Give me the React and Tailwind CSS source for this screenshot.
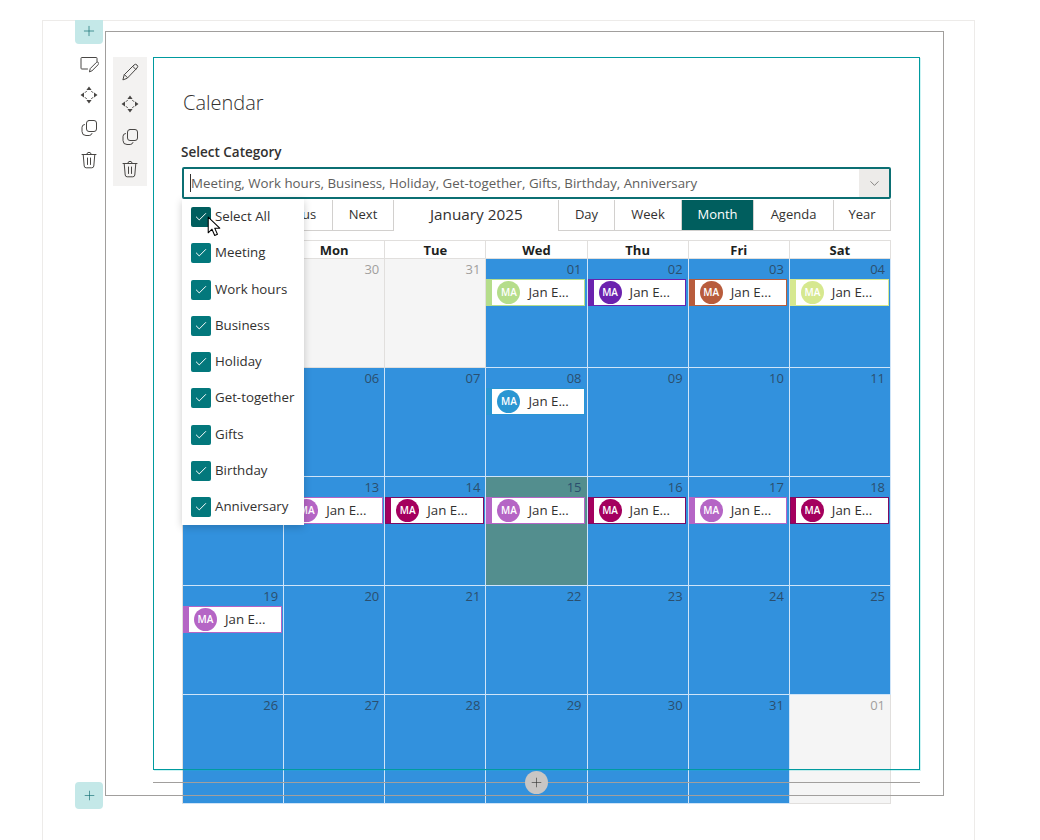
import React from "react";
import { Check, ChevronDown, Plus } from "lucide-react";

const categories = ["Select All", "Meeting", "Work hours", "Business", "Holiday", "Get-together", "Gifts", "Birthday", "Anniversary"];

const green = { bar: "bg-[#b5dd8b]", line: "border-[#b5dd8b]" };
const purple = { bar: "bg-[#6b22ae]", line: "border-[#6b22ae]" };
const rust = { bar: "bg-[#b85c3c]", line: "border-[#b85c3c]" };
const lime = { bar: "bg-[#d6e88f]", line: "border-[#d6e88f]" };
const sky = { bar: "bg-[#2a96d2]", line: "border-[#2a96d2]" };
const orchid = { bar: "bg-[#b565c5]", line: "border-[#b565c5]" };
const berry = { bar: "bg-[#a4005e]", line: "border-[#7d0b63]" };

const headers = ["Sun", "Mon", "Tue", "Wed", "Thu", "Fri", "Sat"];

const days = [
  { n: "29", off: true }, { n: "30", off: true }, { n: "31", off: true }, { n: "01", ev: green }, { n: "02", ev: purple }, { n: "03", ev: rust }, { n: "04", ev: lime },
  { n: "05" }, { n: "06" }, { n: "07" }, { n: "08", ev: sky }, { n: "09" }, { n: "10" }, { n: "11" },
  { n: "12", ev: orchid }, { n: "13", ev: orchid }, { n: "14", ev: berry }, { n: "15", ev: orchid, today: true }, { n: "16", ev: berry }, { n: "17", ev: orchid }, { n: "18", ev: berry },
  { n: "19", ev: orchid }, { n: "20" }, { n: "21" }, { n: "22" }, { n: "23" }, { n: "24" }, { n: "25" },
  { n: "26" }, { n: "27" }, { n: "28" }, { n: "29" }, { n: "30" }, { n: "31" }, { n: "01", off: true },
];

function Icon({ children }) {
  return (
    <svg width="20" height="20" viewBox="0 0 20 20" fill="none" stroke="#484644" strokeWidth="1" strokeLinecap="round" strokeLinejoin="round">
      {children}
    </svg>
  );
}

const NoteIcon = () => (
  <Icon>
    <path d="M8.5 15H2.8a.8.8 0 0 1-.8-.8V4.3a.8.8 0 0 1 .8-.8h14.4a.8.8 0 0 1 .8.8v3.2" />
    <path d="M10.5 17.5l.8-3 6-6a1.4 1.4 0 0 1 2 2l-6 6z" />
  </Icon>
);

const PencilIcon = () => (
  <Icon>
    <path d="M3 17.5l1.2-4.7L14 3a2 2 0 0 1 3 3L7.5 16z" />
    <path d="M12.8 4.4l2.9 2.9M4.4 12.6l3 3" />
  </Icon>
);

const MoveIcon = () => (
  <Icon>
    <path d="M10 1.5L7.4 5h5.2zM10 18.5L7.4 15h5.2zM1.5 10L5 7.4v5.2zM18.5 10L15 7.4v5.2z" fill="#484644" stroke="none" />
    <path d="M7.5 6.2L6.2 7.5M12.5 6.2L13.8 7.5M7.5 13.8L6.2 12.5M12.5 13.8L13.8 12.5" />
  </Icon>
);

const CopyIcon = () => (
  <Icon>
    <rect x="7.5" y="2.5" width="10" height="11" rx="2.5" />
    <path d="M5.5 6.5A2.8 2.8 0 0 0 3 9.3v4.2a4 4 0 0 0 4 4h3.2a3 3 0 0 0 2.8-2" />
  </Icon>
);

const TrashIcon = () => (
  <Icon>
    <path d="M3 4.5h14M7.8 4.5a2.2 2.2 0 0 1 4.4 0" />
    <path d="M4.2 4.5l1 11.5a2 2 0 0 0 2 1.8h5.6a2 2 0 0 0 2-1.8l1-11.5" />
    <path d="M8.5 8v6.5M11.5 8v6.5" />
  </Icon>
);

function CalEvent({ ev }) {
  return (
    <div className={`mt-px mr-[1.5px] h-[27px] flex items-center bg-white border ${ev.line}`}>
      <div className={`w-[5px] h-full ${ev.bar}`} />
      <div className={`ml-[5px] w-[23px] h-[23px] rounded-full flex items-center justify-center text-[10px] font-semibold text-white ${ev.bar}`}>
        MA
      </div>
      <span className="ml-[8px] text-[13.3px] text-[#323130]">Jan E...</span>
    </div>
  );
}

function DayCell({ day }) {
  let bg = "bg-[#3291dd] border-[#cfe4f8]";
  let num = "text-[#2b4f6e]";
  if (day.off) {
    bg = "bg-[#f5f5f5] border-[#e1dfdd]";
    num = "text-[#a19f9d]";
  }
  if (day.today) {
    bg = "bg-[#538e8e] border-[#cfe4f8]";
  }
  return (
    <div className={`h-[109px] border-r border-b ${bg}`}>
      <div className={`h-[19px] pr-[5px] text-right text-[13px] leading-[21px] ${num}`}>{day.n}</div>
      {day.ev && <CalEvent ev={day.ev} />}
    </div>
  );
}

function ViewButton({ label, width, active }) {
  return (
    <div
      className={`${width} flex items-center justify-center text-[13px] border-r border-[#d2d0ce] last:border-r-0 ${
        active ? "bg-[#005e5e] text-white font-medium" : "bg-white text-[#323130]"
      }`}
    >
      {label}
    </div>
  );
}

export default function App() {
  return (
    <div className="w-[1040px] h-[840px] overflow-hidden bg-white pt-[20px] font-['Open_Sans',sans-serif] text-[#323130]">
      <div className="relative ml-[42px] w-[933px] h-[820px] flex border-x border-t border-[#edebe9]">
        {/* Section tools */}
        <div className="w-[62px] pl-[32px] flex flex-col items-start">
          <div className="-mt-px w-[28px] h-[24px] pb-[3px] flex items-center justify-center rounded-b-[4px] bg-[#c4e8e8]">
            <Plus size={16} strokeWidth={1} className="text-[#0b6a6e]" />
          </div>
          <div className="mt-[10px] w-[28px] flex flex-col items-center">
            <NoteIcon />
            <div className="mt-[11px]"><MoveIcon /></div>
            <div className="mt-[13px]"><CopyIcon /></div>
            <div className="mt-[12px]"><TrashIcon /></div>
          </div>
        </div>

        {/* Section */}
        <div className="relative mt-[10px] w-[839px] h-[765px] pl-[8px] pt-[26px] flex items-start">
          <div className="w-[34px] h-[129px] pt-[5px] flex flex-col items-center bg-[#f3f2f1]">
            <PencilIcon />
            <div className="mt-[12px]"><MoveIcon /></div>
            <div className="mt-[13px]"><CopyIcon /></div>
            <div className="mt-[12px]"><TrashIcon /></div>
          </div>

          {/* Web part */}
          <div className="relative ml-[6px] w-[767px] h-[713px] pl-[29px]">
            <h1 className="pt-[31px] pl-[1px] h-[61px] text-[20px] leading-[30px] font-light">Calendar</h1>
            <div className="mt-[25px] -ml-[1px] text-[13.5px] leading-[19px] font-semibold">Select Category</div>

            <div className="mt-[5px] w-[709px] h-[32px] flex items-center border-2 border-[#0b6f73] rounded-[2px] bg-white">
              <div className="ml-[6px] w-px h-[18px] bg-[#323130]" />
              <span className="flex-1 text-[13.3px] leading-[20px] text-[#605e5c] whitespace-nowrap">Meeting, Work hours, Business, Holiday, Get-together, Gifts, Birthday, Anniversary</span>
              <div className="w-[30px] h-full flex items-center justify-center bg-[#edebe9]">
                <ChevronDown size={15} strokeWidth={1} className="text-[#484644]" />
              </div>
            </div>

            {/* Toolbar */}
            <div className="mt-px w-[709px] h-[31px] flex items-stretch">
              <div className="flex border-r border-b border-[#d2d0ce]">
                <ViewButton label="Today" width="w-[66px]" />
                <ViewButton label="Previous" width="w-[85px]" />
                <ViewButton label="Next" width="w-[60px]" />
              </div>
              <div className="ml-[36px] pb-[2px] flex items-center text-[15.3px]">January 2025</div>
              <div className="ml-auto flex border-l border-r border-b border-[#d2d0ce]">
                <ViewButton label="Day" width="w-[56px]" />
                <ViewButton label="Week" width="w-[67px]" />
                <ViewButton label="Month" width="w-[72px]" active />
                <ViewButton label="Agenda" width="w-[80px]" />
                <ViewButton label="Year" width="w-[56px]" />
              </div>
            </div>

            {/* Month grid */}
            <div className="mt-[9px] w-[709px] border-l border-t border-[#e1dfdd]">
              <div className="grid grid-cols-7">
                {headers.map((h) => (
                  <div key={h} className="h-[18px] border-r border-b border-[#e1dfdd] bg-white text-center text-[13px] leading-[18px] font-bold text-[#201f1e]">
                    {h}
                  </div>
                ))}
                {days.map((d, i) => (
                  <DayCell key={i} day={d} />
                ))}
              </div>
            </div>

            {/* Category dropdown */}
            <div className="absolute left-[29px] top-[142px] w-[122px] h-[326px] pt-[8px] bg-white shadow-[0_2px_8px_rgba(0,0,0,0.2)]">
              {categories.map((c, i) => (
                <div key={c} className="h-[36.3px] pl-[9px] flex items-start gap-[4px]">
                  <div className={`w-[20px] h-[20px] flex items-center justify-center rounded-[2px] ${i === 0 ? "bg-[#005e5e]" : "bg-[#03787c]"}`}>
                    <Check size={14} strokeWidth={1.7} className="text-white" />
                  </div>
                  <span className="text-[13.3px] leading-[19px] whitespace-nowrap text-[#323130]">{c}</span>
                </div>
              ))}
            </div>

            {/* Mouse pointer */}
            <svg className="absolute left-[54px] top-[159px]" width="15" height="22" viewBox="0 0 14 21">
              <path d="M1 1v15l3.6-3.4 2.6 6 2.6-1.1-2.6-5.9H12z" fill="#fff" stroke="#000" strokeWidth="1" strokeLinejoin="round" />
            </svg>

            {/* Frame drawn above the calendar, which runs past it */}
            <div className="absolute inset-0 pointer-events-none border border-[#009a9f] shadow-[1px_1px_0_rgba(0,200,200,0.2)]" />
          </div>

          {/* Add web part line */}
          <div className="absolute left-[48px] top-[751px] w-[767px] h-px bg-[#a19f9d]">
            <div className="absolute left-[372px] -top-[11px] w-[23px] h-[23px] flex items-center justify-center rounded-full bg-[#c8c6c4]">
              <Plus size={15} strokeWidth={1} className="text-[#323130]" />
            </div>
          </div>

          <div className="absolute inset-0 pointer-events-none border border-[#a19f9d]" />
        </div>

        {/* Add section */}
        <div className="absolute left-[32px] top-[761px] w-[28px] h-[27px] flex items-center justify-center rounded-[4px] bg-[#c4e8e8]">
          <Plus size={15} strokeWidth={1} className="text-[#0b6a6e]" />
        </div>
      </div>
    </div>
  );
}
